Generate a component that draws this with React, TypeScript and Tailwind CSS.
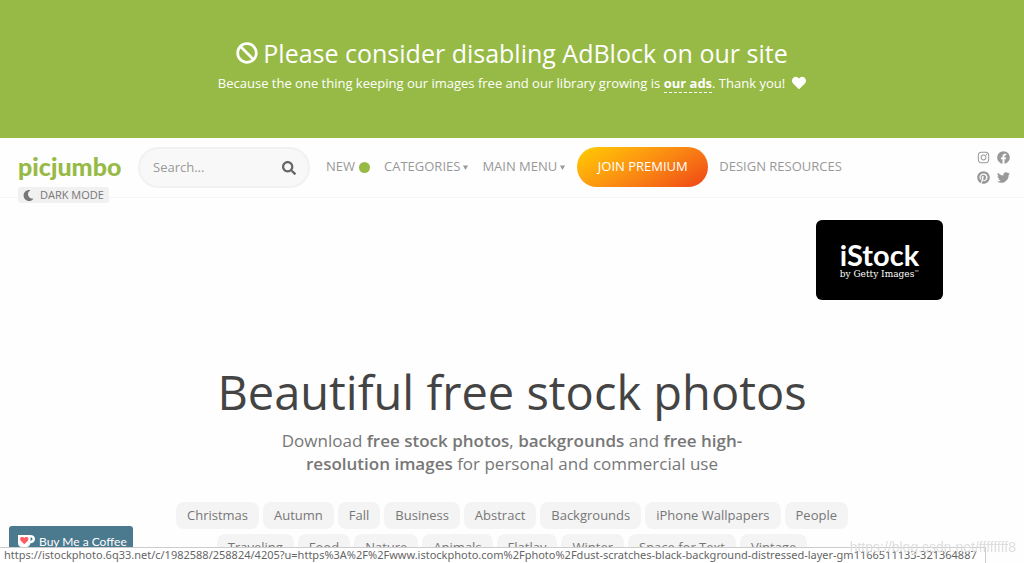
import { FaBan, FaFacebook, FaHeart, FaInstagram, FaMoon, FaPinterest, FaSearch, FaTwitter } from "react-icons/fa";

const tagRows = [
  ["Christmas", "Autumn", "Fall", "Business", "Abstract", "Backgrounds", "iPhone Wallpapers", "People"],
  ["Traveling", "Food", "Nature", "Animals", "Flatlay", "Winter", "Space for Text", "Vintage"],
];

const socials = [
  { name: "Instagram", Icon: FaInstagram },
  { name: "Facebook", Icon: FaFacebook },
  { name: "Pinterest", Icon: FaPinterest },
  { name: "Twitter", Icon: FaTwitter },
];

function Caret() {
  return (
    <svg width="5" height="5" viewBox="0 0 5 5" fill="currentColor" aria-hidden="true">
      <path d="M0 0.5h5L2.5 5z" />
    </svg>
  );
}

function CoffeeCup() {
  return (
    <svg width="17" height="14" viewBox="0 0 17 14" aria-hidden="true">
      <path
        fill="#fff"
        fillRule="evenodd"
        d="M0 1h12.2C15.200 1 17 2.500 17 5s-1.800 4.200-4.600 4.200C12 11.500 10.500 13 8.500 13H4C1.500 13 0 11.500 0 9zM12.500 3.400v3.400c1.300 0 2-.6 2-1.700s-.7-1.700-2-1.700z"
      />
      <path fill="#ff5a5f" d="M6.300 10.300 3 7C1.300 5.100 2.400 3 4.200 3c1 0 1.700.5 2.100 1.200C6.700 3.500 7.400 3 8.400 3c1.800 0 2.900 2.100 1.200 4z" />
    </svg>
  );
}

function Banner() {
  return (
    <section className="flex h-[138px] flex-col items-center bg-[#97ba46] pt-[35px] text-white">
      <h2 className="flex items-center gap-[5px] text-[25px] leading-9">
        <FaBan className="size-[22px]" />
        Please consider disabling AdBlock on our site
      </h2>
      <p className="flex items-center gap-[7px] text-[13px] leading-6">
        <span>
          Because the one thing keeping our images free and our library growing is{" "}
          <a href="#ads" className="border-b border-dashed border-white font-bold">our ads</a>. Thank you!
        </span>
        <FaHeart className="size-[14px]" />
      </p>
    </section>
  );
}

function Header() {
  return (
    <header className="flex h-[60px] items-start border-b border-[#f5f5f5] pr-[14px] pl-[18px] text-[13px] text-[#999]">
      <div className="flex w-[120px] flex-col items-start pt-3">
        <a href="#home" className="h-[37px] font-['Lato',sans-serif] text-[25px] leading-8 font-black text-[#97ba46]">picjumbo</a>
        <button className="flex h-4 items-center gap-[6px] rounded-[3px] bg-[#f1f1f1] px-[5px] text-[11px] text-[#777]">
          <FaMoon className="size-[11px]" />
          DARK MODE
        </button>
      </div>
      <form className="mt-[9px] flex h-[41px] w-[172px] items-center rounded-full border-2 border-[#f1f1f1] bg-[#f8f8f8] pr-3 pl-[13px]">
        <input
          type="search"
          aria-label="Search"
          placeholder="Search..."
          className="min-w-0 flex-1 bg-transparent text-[13px] outline-none placeholder:text-[#999]"
        />
        <button type="button" aria-label="Search" className="text-[#666]">
          <FaSearch className="size-[14px]" />
        </button>
      </form>
      <nav className="mt-[9px] ml-4 flex h-10 items-center">
        <a href="#new" className="flex items-center gap-1">
          NEW
          <span className="size-[11px] rounded-full bg-[#97ba46]" />
        </a>
        <a href="#categories" className="ml-[14px] flex items-center gap-[3px]">CATEGORIES <Caret /></a>
        <a href="#menu" className="ml-[14px] flex items-center gap-[3px]">MAIN MENU <Caret /></a>
        <a
          href="#premium"
          className="ml-[12px] flex h-10 w-[131px] items-center justify-center rounded-full bg-linear-150 from-[#ffcc00] to-[#ee4016] text-white"
        >
          JOIN PREMIUM
        </a>
        <a href="#design" className="ml-[11px]">DESIGN RESOURCES</a>
      </nav>
      <div className="mt-[13px] ml-auto grid grid-cols-2 gap-[7px]">
        {socials.map(({ name, Icon }) => (
          <a key={name} href={"#" + name.toLowerCase()} aria-label={name}>
            <Icon className="size-[13px]" />
          </a>
        ))}
      </div>
    </header>
  );
}

export default function App() {
  return (
    <div className="min-h-screen overflow-hidden bg-[#fefefe] font-['Open_Sans',sans-serif]">
      <Banner />
      <Header />
      <main className="flex flex-col">
        <a
          href="#istock"
          className="mt-[22px] mr-[81px] flex h-20 w-[127px] flex-col items-center justify-center self-end rounded-md bg-black text-white"
        >
          <span className="font-['Lato',sans-serif] text-[29px] leading-7 font-bold">iStock</span>
          <span className="flex font-['DejaVu_Serif',serif] text-[9px] leading-[10px]">
            by Getty Images<span className="text-[5px] leading-[6px]">™</span>
          </span>
        </a>
        <h1 className="mt-[59px] text-center text-[47px] leading-[66px] text-[#444]">Beautiful free stock photos</h1>
        <p className="mx-auto mt-1 w-[500px] text-center text-[17px] leading-[23px] text-[#777]">
          Download <b className="font-semibold">free stock photos</b>, <b className="font-semibold">backgrounds</b> and{" "}
          <b className="font-semibold">free high-resolution images</b> for personal and commercial use
        </p>
        <ul className="mt-[27px] flex flex-col gap-[5px] text-[13px] text-[#777]">
          {tagRows.map((row) => (
            <li key={row[0]} className="flex justify-center gap-1">
              {row.map((tag) => (
                <a key={tag} href="#tag" className="flex h-[27px] items-center rounded-lg bg-[#f4f4f4] px-[11px]">
                  {tag}
                </a>
              ))}
            </li>
          ))}
        </ul>
      </main>
      <a
        href="#coffee"
        className="fixed bottom-0 left-[9px] flex h-[37px] w-[124px] items-start gap-1 rounded-t-[3px] bg-[#4b7a8f] pt-2 pl-[9px] font-['Lato',sans-serif] text-[12px] leading-4 whitespace-nowrap text-white"
      >
        <CoffeeCup />
        Buy Me a Coffee
      </a>
      <div className="fixed bottom-0 left-0 flex h-4 items-center border-t border-r border-[#ccc] bg-white pr-2 pl-1 font-['Noto_Sans',sans-serif] text-[11px] whitespace-nowrap text-[#666]">
        https://istockphoto.6q33.net/c/1982588/258824/4205?u=https%3A%2F%2Fwww.istockphoto.com%2Fphoto%2Fdust-scratches-black-background-distressed-layer-gm1166511133-321364887
      </div>
      <span className="fixed right-2 bottom-[7px] font-['Liberation_Sans',sans-serif] text-[14px] leading-[18px] text-[#dedede]">
        https://blog.csdn.net/ffffffff8
      </span>
    </div>
  );
}
